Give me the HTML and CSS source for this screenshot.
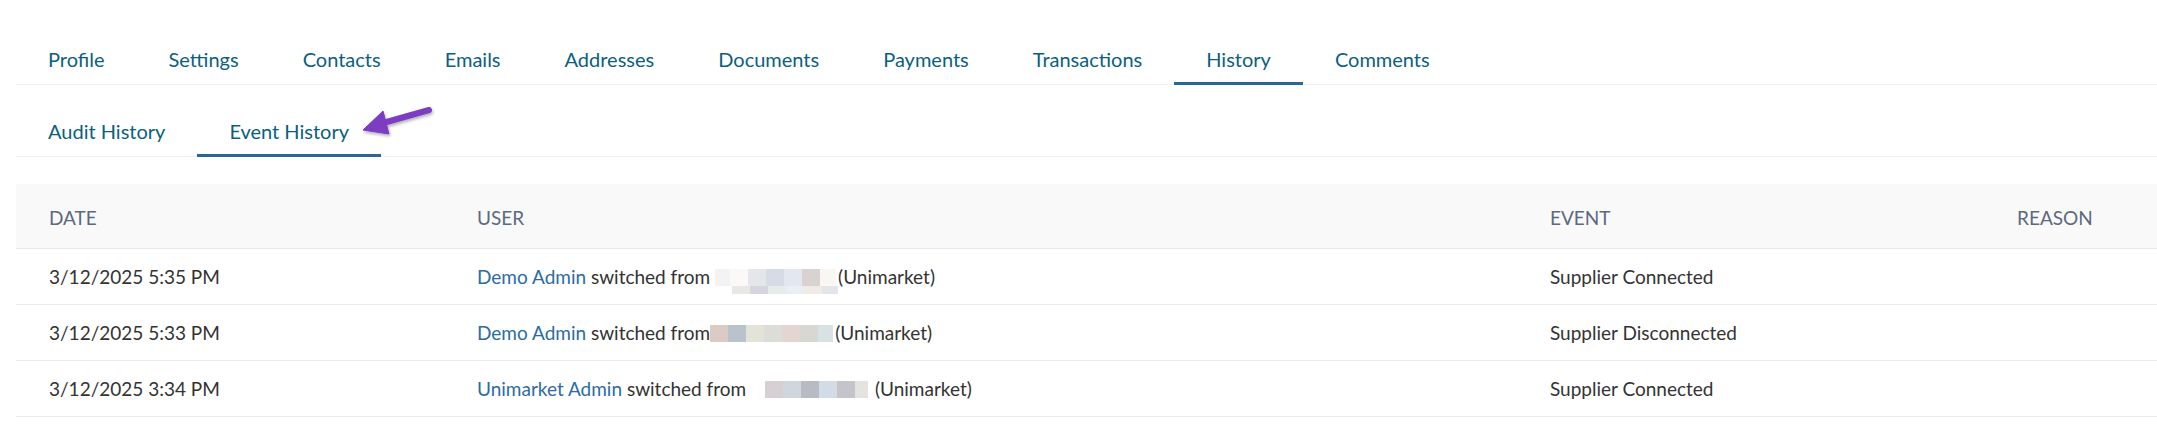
FILE: index.html
```html
<!DOCTYPE html>
<html lang="en">
<head>
  <meta charset="UTF-8" />
  <meta name="viewport" content="width=device-width, initial-scale=1.0" />
  <title>Supplier History</title>
  <link rel="stylesheet" href="styles.css">
</head>
<body>
  <div class="page">
    <nav class="tabs">
      <a class="tab">Profile</a>
      <a class="tab">Settings</a>
      <a class="tab">Contacts</a>
      <a class="tab">Emails</a>
      <a class="tab">Addresses</a>
      <a class="tab">Documents</a>
      <a class="tab">Payments</a>
      <a class="tab">Transactions</a>
      <a class="tab active">History</a>
      <a class="tab">Comments</a>
    </nav>

    <nav class="tabs sub-tabs">
      <a class="tab">Audit History</a>
      <a class="tab active">Event History</a>
      <!-- annotation arrow pointing at the active sub tab -->
      <svg class="pointer" width="90" height="50" viewBox="0 0 90 50">
        <defs>
          <filter id="shadow" x="-20%" y="-20%" width="140%" height="160%">
            <feDropShadow dx="1" dy="2" stdDeviation="1.5" flood-color="#000" flood-opacity="0.3" />
          </filter>
        </defs>
        <g filter="url(#shadow)" fill="#7b3cc2" stroke="#7b3cc2">
          <line x1="26" y1="23" x2="72" y2="10" stroke-width="6" stroke-linecap="round" />
          <polygon points="6,30 26,11 32,34" stroke-width="1" stroke-linejoin="round" />
        </g>
      </svg>
    </nav>

    <table class="history">
      <colgroup>
        <col class="col-date">
        <col class="col-user">
        <col class="col-event">
        <col>
      </colgroup>
      <thead>
        <tr>
          <th>Date</th>
          <th>User</th>
          <th>Event</th>
          <th>Reason</th>
        </tr>
      </thead>
      <tbody>
        <tr>
          <td>3/12/2025 5:35 PM</td>
          <td>
            <a class="user">Demo Admin</a> switched from
            <span class="blur blur-a">
              <span class="px" style="width:15px;background:#f3f3f3"></span><span class="px" style="background:#faf9f7"></span><span class="px" style="background:#e5e6ea"></span><span class="px" style="background:#d5dce6"></span><span class="px" style="background:#e3e8f0"></span><span class="px" style="background:#d8d3d1"></span><span class="px" style="width:16px;background:#faf6f3"></span>
              <span class="blur-under">
                <span class="px" style="background:#e9e8e5"></span><span class="px" style="background:#d6d6df"></span><span class="px" style="background:#e7ebe9"></span><span class="px" style="background:#ebeff5"></span><span class="px" style="background:#f0ebe5"></span><span class="px" style="width:16px;background:#e4e5ea"></span>
              </span>
            </span>(Unimarket)
          </td>
          <td>Supplier Connected</td>
          <td></td>
        </tr>
        <tr>
          <td>3/12/2025 5:33 PM</td>
          <td>
            <a class="user">Demo Admin</a> switched from<span class="blur"><span class="px" style="background:#dccbc5"></span><span class="px" style="background:#b9c3cc"></span><span class="px" style="background:#e3e3d7"></span><span class="px" style="background:#dcdcd8"></span><span class="px" style="background:#e3d5d2"></span><span class="px" style="background:#d9d7d3"></span><span class="px" style="width:15px;background:#d8e1e4"></span></span>(Unimarket)
          </td>
          <td>Supplier Disconnected</td>
          <td></td>
        </tr>
        <tr>
          <td>3/12/2025 3:34 PM</td>
          <td>
            <a class="user">Unimarket Admin</a> switched from <span class="blur blur-c"><span class="px" style="background:#d6d0d4"></span><span class="px" style="background:#d0d6de"></span><span class="px" style="background:#b9bbc2"></span><span class="px" style="background:#d2dce6"></span><span class="px" style="background:#c6c4cb"></span><span class="px" style="width:13px;background:#e3e3e1"></span></span> (Unimarket)
          </td>
          <td>Supplier Connected</td>
          <td></td>
        </tr>
      </tbody>
    </table>
  </div>
</body>
</html>
```

FILE: styles.css
```css
body {
  margin: 0;
  background: #fff;
  font-family: Lato, 'Open Sans', sans-serif;
  color: #333;
}
.page {
  padding-left: 16px;
}
.tabs {
  display: flex;
  padding-top: 35px;
  border-bottom: 1px solid #f0f1f5;
}
.tab {
  padding: 12px 32px 11px;
  font-size: 20px;
  line-height: 24px;
  color: #0b5f7f;
  border-bottom: 3px solid transparent;
  margin-bottom: -1px;
  cursor: pointer;
}
.tab.active {
  border-bottom-color: #2b6698;
}
.sub-tabs {
  position: relative;
  padding-top: 22px;
}
.pointer {
  position: absolute;
  left: 341px;
  top: 15px;
}
.history {
  width: 100%;
  margin-top: 27px;
  border-collapse: collapse;
  font-size: 19px;
}
.col-date { width: 428px; }
.col-user { width: 1073px; }
.col-event { width: 467px; }
.history th {
  height: 62px;
  padding: 2px 33px 0;
  text-align: left;
  font-weight: normal;
  text-transform: uppercase;
  color: #5c6981;
  background: #f9f9f9;
  border-bottom: 1px solid #e8e8e8;
}
.history td {
  height: 55px;
  padding: 0 33px;
  border-bottom: 1px solid #ebebeb;
  white-space: nowrap;
}
.user {
  color: #2c6ca3;
  cursor: pointer;
}
.blur {
  display: inline-flex;
  position: relative;
  vertical-align: -2px;
  height: 17px;
  margin-right: 2px;
}
.blur .px {
  display: inline-block;
  width: 18px;
  height: 17px;
}
.blur-under {
  position: absolute;
  left: 17px;
  top: 17px;
  display: flex;
}
.blur-under .px {
  height: 8px;
}
.blur-c {
  margin-left: 14px;
}
```
